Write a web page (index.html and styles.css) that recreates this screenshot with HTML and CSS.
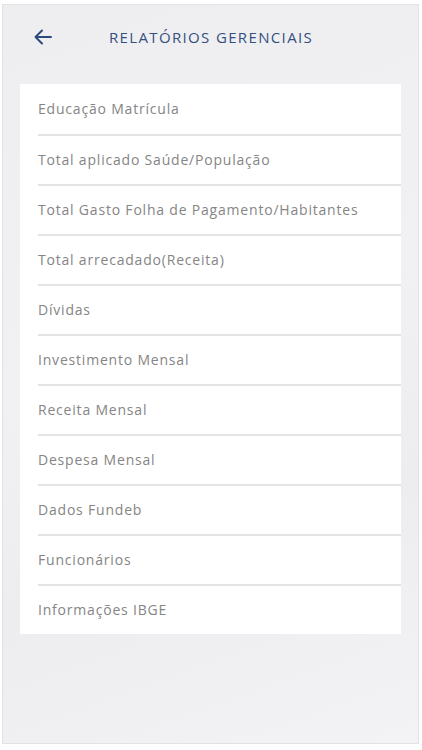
FILE: index.html
```html
<!DOCTYPE html>
<html lang="pt-BR">
<head>
    <meta charset="UTF-8">
    <meta name="viewport" content="width=device-width, initial-scale=1.0">
    <title>Relatórios Gerenciais</title>
    <link rel="stylesheet" href="styles.css">
</head>
<body>
    <div class="screen">
        <div class="header">
            <button class="back" aria-label="Voltar">
                <svg width="20" height="16" viewBox="0 0 20 16">
                    <path d="M18 8H3M9 1.5L2.5 8L9 14.5" fill="none" stroke="#2b4a7e" stroke-width="2" stroke-linecap="round" stroke-linejoin="round"/>
                </svg>
            </button>
            <h1 class="title">RELATÓRIOS GERENCIAIS</h1>
        </div>

        <ul class="menu">
            <li class="menu-item">Educação Matrícula</li>
            <li class="menu-item">Total aplicado Saúde/População</li>
            <li class="menu-item">Total Gasto Folha de Pagamento/Habitantes</li>
            <li class="menu-item">Total arrecadado(Receita)</li>
            <li class="menu-item">Dívidas</li>
            <li class="menu-item">Investimento Mensal</li>
            <li class="menu-item">Receita Mensal</li>
            <li class="menu-item">Despesa Mensal</li>
            <li class="menu-item">Dados Fundeb</li>
            <li class="menu-item">Funcionários</li>
            <li class="menu-item">Informações IBGE</li>
        </ul>
    </div>
</body>
</html>
```

FILE: styles.css
```css
html, body {
    margin: 0;
    padding: 0;
    background-color: #ffffff;
}

body {
    font-family: "Open Sans", "Liberation Sans", sans-serif;
    padding: 4px 3px 4px 2px;
}

.screen {
    height: 740px;
    box-sizing: border-box;
    border: 1px solid #e2e2e4;
    background-color: #efeff1;
    background-image: linear-gradient(160deg, #eeeef0 0%, #f1f1f3 45%, #ededef 70%, #f3f3f5 100%);
}

.header {
    display: flex;
    align-items: center;
    height: 63px;
    padding: 0 0 0 30px;
}

.back {
    border: none;
    background: none;
    padding: 0;
    width: 22px;
    height: 18px;
    display: flex;
    align-items: center;
    cursor: pointer;
}

.title {
    margin: 0 0 0 54px;
    font-size: 15px;
    font-weight: 400;
    color: #34507f;
    letter-spacing: 1.35px;
}

.menu {
    list-style: none;
    margin: 16px 17px 0 17px;
    padding: 0;
    background-color: #ffffff;
}

.menu-item {
    height: 50px;
    line-height: 50px;
    padding-left: 18px;
    font-size: 14px;
    letter-spacing: 0.8px;
    color: #858585;
    position: relative;
}

.menu-item + .menu-item {
    border-top: 2px solid transparent;
    height: 48px;
    line-height: 48px;
}

.menu-item + .menu-item::before {
    content: "";
    position: absolute;
    top: -2px;
    left: 18px;
    right: 0;
    border-top: 2px solid #e4e4e6;
}
```
